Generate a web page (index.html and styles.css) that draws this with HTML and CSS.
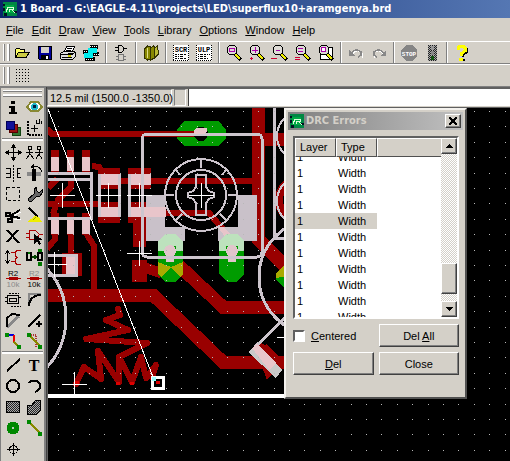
FILE: index.html
```html
<!DOCTYPE html>
<html lang="en">
<head>
<meta charset="utf-8">
<title>1 Board - G:\EAGLE-4.11\projects\LED\superflux10+aramgenya.brd</title>
<link rel="stylesheet" href="styles.css">
</head>
<body>
<svg class="defs" aria-hidden="true">
  <defs>
    <symbol id="app" viewBox="0 0 14 14"><path fill="#084" d="M0 0h14v14H0z"/><path fill="#012" d="M0 2h2v2H0zM0 6h4v3H0zM1 11h3v3H1zM11 9h3v2h-3z"/><path fill="#0a4" d="M2 3h9v8H2z"/><path fill="none" stroke="#dfd" d="M3 10l2-5h5v2H7l-1 3M9 8l3 3"/></symbol>
    <symbol id="lens" viewBox="0 0 18 18"><path stroke="#000" stroke-width="4" d="M10 10l6 6"/><path stroke="#ee0" stroke-width="2" d="M10 10l5 5"/><circle cx="7" cy="6" r="5" fill="#dedbd6" stroke="#000"/></symbol>
    <pattern id="check" width="2" height="2" patternUnits="userSpaceOnUse"><path fill="#aaa" d="M0 0h2v2H0z"/><path fill="#222" d="M0 0h1v1H0zM1 1h1v1H1z"/></pattern>
    <pattern id="dots" x="58" y="111" width="77" height="77" patternUnits="userSpaceOnUse">
      <path stroke="#b8b8b8" stroke-dasharray="1 14 1 15 1 14 1 15 1 14" d="M0 .5h77M0 15.500h77M0 31.500h77M0 46.500h77M0 62.500h77"/>
    </pattern>
  </defs>
</svg>
<div class="window">
  <header class="titlebar"><svg class="logo"><use href="#app"/></svg><h1>1 Board - G:\EAGLE-4.11\projects\LED\superflux10+aramgenya.brd</h1></header>
  <nav class="menu">
    <button><u>F</u>ile</button><button><u>E</u>dit</button><button><u>D</u>raw</button><button><u>V</u>iew</button><button><u>T</u>ools</button><button><u>L</u>ibrary</button><button><u>O</u>ptions</button><button><u>W</u>indow</button><button><u>H</u>elp</button>
  </nav>
  <div class="toolbar">
    <i class="grip"></i>
    <div class="group">
      <button aria-label="Open"><svg viewBox="0 0 18 18"><path fill="#ff6" stroke="#000" d="M2.500 13.500v-8l1-1h3l1 1h4v3h4.500l-3 5z"/><path fill="#cc4" stroke="#000" d="M2.500 13.500l3-5h11l-3.500 5z"/></svg></button>
      <button aria-label="Save"><svg viewBox="0 0 18 18"><path fill="#009" stroke="#000" d="M2.500 2.500h13v13h-12l-1-1z"/><path fill="#d4d0c8" d="M5 3h8v6H5z"/><path fill="#000" d="M5 11h8v4H5z"/><path fill="#fff" d="M10 12h2v3h-2z"/></svg></button>
      <button aria-label="Print"><svg viewBox="0 0 18 18"><path fill="#fff" stroke="#000" d="M5.500 7.500l2-5h8l-2 5z"/><path stroke="#000" d="M8 4.500h5M7 6.500h5"/><path fill="#ddd" stroke="#000" d="M1.500 9.500l3-2h11l1 1v4l-3 3h-11l-1-1z"/><path stroke="#000" d="M2 10.500h11l3-2M3 13.500h10"/><path stroke="#cc0" stroke-width="2" d="M9 12h3"/></svg></button>
      <button aria-label="CAM Processor"><svg viewBox="0 0 18 18"><path fill="#000" d="M8 1h8v4H8zM1 6h6v4H1zM11 8h6v4h-6zM3 13h10v4H3z"/><path fill="#0ee" d="M6 4h9v5H6zM2 9h9v5H2z"/><path fill="none" stroke="#fff" stroke-dasharray="1 1" d="M8 2.500h7M2 7.500h4M12 10.500h5M4 15.500h8"/></svg></button>
    </div>
    <div class="group">
      <button aria-label="Schematic"><svg viewBox="0 0 18 18"><path fill="none" stroke="#000" d="M3 3.500h3M3 6.500h3M6.500 1.500v7h3l2-2v-3l-2-2zM12 4.500h3"/><path fill="none" stroke="#777" d="M6.500 10.500h5v6h-5zM4 12.500h2M4 15.500h2M12 12.500h2M12 15.500h2"/></svg></button>
    </div>
    <div class="group">
      <button aria-label="Library"><svg viewBox="0 0 18 18"><path fill="#880" stroke="#330" d="M2.500 5l3-3 3 1v12l-3 1-3-2zM8.500 4l3-2 1 1v11l-4 2z"/><path fill="#bb3" stroke="#330" d="M12.500 4l3-2 1 8-4 4z"/><path stroke="#dd8" d="M5.500 4v10"/></svg></button>
    </div>
    <div class="group">
      <button aria-label="Script"><svg viewBox="0 0 18 18"><path fill="#fff" d="M1 1h16v16H1z"/><path stroke="#000" stroke-dasharray="2 1 1 1 3 1" d="M3 10.500h12M3 12.500h9M3 14.500h11"/><path stroke="#000" stroke-dasharray="1 1" d="M1 16.500h16M16.500 1v16M1.500 1v16"/><text x="9" y="8" class="chip">SCR</text></svg></button>
      <button aria-label="User language program"><svg viewBox="0 0 18 18"><path fill="#fff" d="M1 1h16v16H1z"/><path stroke="#000" stroke-dasharray="1 1 3 1 2 1" d="M3 10.500h12M3 12.500h9M3 14.500h11"/><path stroke="#000" stroke-dasharray="1 1" d="M1 16.500h16M16.500 1v16M1.500 1v16"/><text x="9" y="8" class="chip">ULP</text></svg></button>
    </div>
    <div class="group">
      <button aria-label="Zoom to fit"><svg viewBox="0 0 18 18"><use href="#lens"/><path fill="none" stroke="#a0a" d="M4.500 4.500h5v3h-5z"/></svg></button>
      <button aria-label="Zoom in"><svg viewBox="0 0 18 18"><use href="#lens"/><path stroke="#a0a" d="M4 6.500h6M7.500 3v6"/><path stroke="#c03" d="M2 14.500h3M3.500 13v3"/></svg></button>
      <button aria-label="Zoom out"><svg viewBox="0 0 18 18"><use href="#lens"/><path stroke="#a0a" d="M5 6.500h4"/><path stroke="#c03" d="M0 14.500h6"/></svg></button>
      <button aria-label="Redraw"><svg viewBox="0 0 18 18"><use href="#lens"/><path stroke="#a0a" d="M4 4.500h5M4 7.500h5"/><path stroke="#c03" d="M1 13.500h5M1 15.500h5"/></svg></button>
      <button aria-label="Zoom selection"><svg viewBox="0 0 18 18"><path fill="#fff" stroke="#000" d="M3.500 3.500h12v12h-12z"/><use href="#lens"/><path fill="#fff" stroke="#a0a" d="M4.500 3.500h4v4h-4z"/></svg></button>
    </div>
    <div class="group">
      <button disabled aria-label="Undo"><svg viewBox="0 0 18 18"><path fill="none" stroke="#fff" d="M5 11c3-5 7-5 10-2v5"/><path fill="none" stroke="#888" stroke-width="1.500" d="M4 10c3-5 7-5 10-2v3l-3 2"/><path fill="#888" d="M2 6v6h6z"/></svg></button>
      <button disabled aria-label="Redo"><svg viewBox="0 0 18 18"><path fill="none" stroke="#fff" d="M14 11c-3-5-7-5-10-2v5"/><path fill="none" stroke="#888" stroke-width="1.500" d="M14 10c-3-5-7-5-10-2v3l3 2"/><path fill="#888" d="M16 6v6h-6z"/></svg></button>
    </div>
    <div class="group">
      <button disabled aria-label="Stop"><svg viewBox="0 0 18 18"><path fill="#858585" d="M6 1h6l5 5v6l-5 5H6l-5-5V6z"/><text x="9" y="12" class="chip stop">STOP</text></svg></button>
      <button aria-label="Go"><svg viewBox="0 0 18 18"><path fill="url(#check)" d="M5 1h9v16H5z"/><circle cx="9.500" cy="4" r="2" fill="#999"/><circle cx="9.500" cy="9" r="2" fill="#888"/><circle cx="9.500" cy="14" r="2" fill="#151"/></svg></button>
    </div>
    <div class="group">
      <button aria-label="Help"><svg viewBox="0 0 18 18"><path fill="none" stroke="#000" stroke-width="2" d="M6 6V4l2-1h4l2 2v3l-4 3v2M9 16h3"/><path fill="none" stroke="#ff0" stroke-width="3" d="M5 6V4l2-2h3l2 2v3l-4 3v2M6 15h4"/></svg></button>
    </div>
  </div>
  <div class="toolbar">
    <i class="grip"></i>
    <button aria-label="Grid"><svg viewBox="0 0 18 18"><path stroke="#000" stroke-dasharray="1 2" d="M3 2.500h15M3 5.500h15M3 8.500h15M3 11.500h15M3 14.500h15"/></svg></button>
  </div>
  <div class="work">
    <aside class="palette">
      <i class="handle"></i>
      <div class="tools">
        <button aria-label="Info"><svg viewBox="0 0 20 20"><path d="M8 4h4v3H8zM6 9h6v6h2v2H6v-2h2v-4H6z"/></svg></button>
        <button aria-label="Show"><svg viewBox="0 0 20 20"><path fill="#fff" stroke="#883" stroke-width="2" d="M3 10l4-5h7l4 5-4 4H7z"/><circle cx="10.500" cy="9.500" r="3.500" fill="#2bc"/><circle cx="10.500" cy="9.500" r="1.500" fill="#024"/></svg></button>
        <button aria-label="Display"><svg viewBox="0 0 20 20"><path fill="#373" stroke="#141" d="M9 9h8v8H9z"/><path fill="#911" stroke="#500" d="M6 6h8v8H6z"/><path fill="#119" stroke="#005" d="M3 3h8v8H3z"/></svg></button>
        <button aria-label="Mark"><svg viewBox="0 0 20 20"><path fill="none" stroke="#000" stroke-width="2" stroke-dasharray="2 1" d="M4 3v14h14"/><path fill="none" stroke="#000" d="M7 10.500h7M10.500 7v7M12.500 2v3h3V1M17.500 2.500v3"/></svg></button>
      </div>
      <hr>
      <div class="tools">
        <button aria-label="Move"><svg viewBox="0 0 20 20"><path stroke="#000" d="M10.500 3v15M3 10.500h15"/><path d="M10.500 2l3 4h-6zM10.500 19l3-4h-6zM2 10.500l4-3v6zM19 10.500l-4-3v6z"/></svg></button>
        <button aria-label="Copy"><svg viewBox="0 0 20 20"><path fill="none" stroke="#000" d="M4.500 4.500h3v3h-3zM2 10.500h7M5.500 7v6M5.500 12l-3 5M6.500 12l3 5M13.500 4.500h3v3h-3zM11 10.500h8M15.500 7v6M15 12l-3 5M15 12l3 5"/></svg></button>
        <button aria-label="Mirror"><svg viewBox="0 0 20 20"><path fill="none" stroke="#000" d="M3 5.500h4v9H3M3 10.500h4M18 5.500h-4v9h4M14 10.500h3"/><path stroke="#000" stroke-dasharray="2 1" d="M10.500 2v17"/></svg></button>
        <button aria-label="Rotate"><svg viewBox="0 0 20 20"><path fill="#888" d="M3 9h14v4H3z"/><path d="M8 6h4v12H8z"/><path fill="none" stroke="#000" d="M8 4c5-2 9 1 10 5"/><path d="M6 4l4-3v5z"/></svg></button>
        <button aria-label="Group"><svg viewBox="0 0 20 20"><path fill="none" stroke="#000" stroke-dasharray="3 2" d="M3.500 3.500h13v13h-13z"/></svg></button>
        <button aria-label="Change"><svg viewBox="0 0 20 20"><path fill="#666" stroke="#000" d="M12 3l-2 3v4l-6 5 1 2 2 1 6-6h3l2-3V6l-3 3-2-2z"/></svg></button>
        <button aria-label="Cut"><svg viewBox="0 0 20 20"><path stroke="#fff" d="M9 12l9-5M11 14l7 1"/><path stroke="#000" stroke-width="2" d="M7 11l10-6M7 11l10 2"/><path fill="none" stroke="#000" stroke-width="1.500" d="M3 8h4v3H3zM5 14h4v3H5zM7 14l3-4"/></svg></button>
        <button aria-label="Paste"><svg viewBox="0 0 20 20"><path stroke="#000" stroke-width="2" d="M5 3l9 9"/><path fill="#ee0" d="M11 11l4 1 3 5H3z"/><path stroke="#990" d="M9 15l3-3"/></svg></button>
        <button aria-label="Delete"><svg viewBox="0 0 20 20"><path stroke="#000" stroke-width="2" d="M4 4l12 13M15 4L4 16"/></svg></button>
        <button aria-label="Add"><svg viewBox="0 0 20 20"><path fill="none" stroke="#a00" d="M5.500 4.500h6l4 4-4 5h-6zM2 7.500h4M2 11.500h4M16 8.500h3"/><path d="M10 8v10l3-3 2 4 2-1-2-4h4z"/></svg></button>
        <button aria-label="Pinswap"><svg viewBox="0 0 20 20"><path stroke="#000" d="M4.500 4v12"/><path fill="none" stroke="#000" d="M2 7l2.500-3L7 7M2 13l2.500 3L7 13"/><path fill="none" stroke="#a00" d="M8 5.500h4M8 14.500h4M18 3.500h-4l-2 2v3l2 2-2 2v3l2 2h4"/></svg></button>
        <button aria-label="Gateswap"><svg viewBox="0 0 20 20"><path fill="none" stroke="#000" stroke-width="1.500" d="M3 6h4v7H3zM14 6h4v7h-4z"/><path stroke="#040" stroke-width="1.500" d="M8 10h5M11 8v4"/><path fill="#070" d="M14 2h4v3h-4zM14 15h4v4h-4zM4 5h2v2H4z"/></svg></button>
        <button aria-label="Name"><svg viewBox="0 0 20 20"><path stroke="#a00" d="M3 10.500h15M6 9.500h9M6 11.500h9"/><text x="10" y="8" class="part">R2</text><text x="10" y="19" class="part dim">10k</text></svg></button>
        <button aria-label="Value"><svg viewBox="0 0 20 20"><path stroke="#a00" d="M3 10.500h15M6 9.500h9M6 11.500h9"/><text x="10" y="8" class="part dim">R2</text><text x="10" y="19" class="part">10k</text></svg></button>
        <button aria-label="Smash"><svg viewBox="0 0 20 20"><path fill="none" stroke="#000" d="M4.500 6.500h11v8h-11zM6.500 9v3h7V9zM2 8.500h2M2 12.500h2M16 8.500h2"/><path fill="none" stroke="#000" stroke-dasharray="2 1" d="M6 4.500h10M8 17.500h10"/></svg></button>
        <button aria-label="Miter"><svg viewBox="0 0 20 20"><path fill="none" stroke="#888" stroke-width="2" d="M5 16V5h12"/><path fill="none" stroke="#000" stroke-width="2" d="M5 17c0-6 4-11 12-11"/></svg></button>
        <button aria-label="Split"><svg viewBox="0 0 20 20"><path fill="none" stroke="#888" stroke-width="3" d="M4 17L16 6"/><path fill="none" stroke="#000" stroke-width="2" d="M4 17V8l5-4 8 1"/></svg></button>
        <button aria-label="Optimize"><svg viewBox="0 0 20 20"><path stroke="#000" stroke-width="2" d="M4 17L16 5"/><path stroke="#000" stroke-width="1.500" d="M12 14h6M15 11v6"/></svg></button>
        <button aria-label="Route"><svg viewBox="0 0 20 20"><path fill="none" stroke="#00d" stroke-width="2" d="M5 4h6"/><path fill="none" stroke="#e00" stroke-width="2" d="M11 4v7"/><path fill="none" stroke="#880" stroke-width="2" d="M11 11l5 5"/><path fill="#080" d="M2 2h4v4H2zM14 14h4v4h-4z"/></svg></button>
        <button aria-label="Ripup"><svg viewBox="0 0 20 20"><path fill="none" stroke="#a33" stroke-width="2" stroke-dasharray="1 1" d="M5 4h7v12"/><path stroke="#880" stroke-width="2" d="M5 4l12 12"/><path fill="#080" d="M3 2h4v4H3zM14 14h4v4h-4z"/></svg></button>
      </div>
      <hr>
      <div class="tools">
        <button aria-label="Wire"><svg viewBox="0 0 20 20"><path stroke="#000" stroke-width="2" d="M4 16L17 4"/></svg></button>
        <button aria-label="Text"><svg viewBox="0 0 20 20"><text x="10" y="16" class="type">T</text></svg></button>
        <button aria-label="Circle"><svg viewBox="0 0 20 20"><circle cx="10" cy="10" r="6" fill="none" stroke="#000" stroke-width="2"/></svg></button>
        <button aria-label="Arc"><svg viewBox="0 0 20 20"><path fill="none" stroke="#000" stroke-width="2" d="M5 7c3-4 11-3 11 3 0 3-2 5-5 6"/></svg></button>
        <button aria-label="Rectangle"><svg viewBox="0 0 20 20"><path fill="url(#check)" stroke="#000" d="M3.500 4.500h13v11h-13z"/></svg></button>
        <button aria-label="Polygon"><svg viewBox="0 0 20 20"><path fill="url(#check)" stroke="#000" d="M3.500 17.500v-9h4l4-5h5v10l-4 4z"/></svg></button>
        <button aria-label="Via"><svg viewBox="0 0 20 20"><circle cx="10" cy="10" r="6.500" fill="#080"/><circle cx="10" cy="10" r="1.500" fill="#bcb"/></svg></button>
        <button aria-label="Signal"><svg viewBox="0 0 20 20"><path stroke="#880" stroke-width="2" d="M5 4l11 11"/><path fill="#080" d="M3 2h4v4H3zM14 14h4v4h-4z"/></svg></button>
        <button aria-label="Hole"><svg viewBox="0 0 20 20"><circle cx="10.500" cy="10.500" r="4" fill="none" stroke="#000"/><path stroke="#000" d="M4 10.500h13M10.500 4v13"/></svg></button>
      </div>
    </aside>
    <main class="editor">
      <div class="command">
        <output>12.5 mil (1500.0 -1350.0)</output>
        <i class="cell"></i>
        <input type="text" aria-label="Command">
      </div>
      <div class="canvas">
        <svg class="board" viewBox="48 108 462 353" preserveAspectRatio="xMinYMin slice">
          <g fill="none" stroke="#900">
            <path stroke-width="6" d="M47 129l5 5h150M120 181h133M151 213h58l24 28M98 204H48M71 178v9l-13 13-5 14M92 166l7 1 6 8M48 188l9-9M55 233v6l-8 10M71 233v22M86 233l8 13v45"/>
            <path stroke-width="13" d="M258 108v131l30 30M264 139h24M48 295h105l70 67h65M170 257l53 50h65M139 223v24M265 345l-7 15"/>
            <path stroke-width="6" stroke-linejoin="round" stroke-linecap="round" d="M118 309l2 6-14 5 22 10-42 9 61 4-28 14v25l-21-31 3 28-17-12-8 17M119 357l13 25 9-25 5 21 10-13-4 12"/>
          </g>
          <path fill="#900" d="M51 150h8v22h-8zM67 150h7v22h-7zM82 150h8v22h-8zM51 213h8v22h-8zM67 213h7v22h-7zM82 213h8v22h-8zM98 168h22v21H98zM98 202h22v21H98zM128 168h23v21h-23zM128 202h23v21h-23zM132 260h15v22h-15zM147 263l13 4v11l-13-4zM62 253h20v23H62zM257 353l9-9 18 18-17 18z"/>
          <circle cx="301" cy="200" r="22" fill="none" stroke="#900" stroke-width="8"/>
          <path fill="#009c00" d="M184 121h35l7 9v8l-7 8h-35l-7-8v-8zM158 241h25v33l-7 8h-11l-7-8zM219 241h25v33l-7 8h-10l-8-8zM276 273l10-9v26l-10-10z"/>
          <path fill="#aa0" d="M158 262l13 5 12-5v12l-3 3-9-10-9 10-4-3zM276 273l10-9v12l-10 2z"/>
          <path stroke="#900" stroke-width="6" d="M177 134h24"/>
          <circle cx="201" cy="134" r="7"/>
          <path fill="#c9c1c9" d="M146 195h19v32h20v14h-39zM238 195h19v46h-39v-14h20z"/>
          <path fill="#e8c5ca" d="M146 211h19v6h-19zM218 227l10 14h8l-12-14z"/>
          <path fill="#bde2bd" d="M158 241l8-7h9l8 7v10h-7v-5h-10v5h-8zM219 241l7-7h11l7 7v10h-6v-5h-12v5h-7z"/>
          <path fill="#e8c5ca" d="M51 157h8v14h-8zM67 157h7v14h-7zM82 157h8v14h-8zM51 220h8v14h-8zM67 220h7v14h-7zM82 220h8v14h-8zM98 174h22v11H98zM98 207h22v10H98zM128 174h23v11h-23zM128 207h38v10h-38zM66 254h10v22H66z"/>
          <g fill="#e0c5ca"><circle cx="170" cy="251" r="6"/><circle cx="232" cy="251" r="6"/><path d="M166 250h8v12h-8zM228 250h8v12h-8z"/></g>
          <g fill="none" stroke="#cdc5cd" stroke-width="3">
            <rect x="142" y="134" width="120" height="123" rx="5"/>
            <path d="M48 173h43v45H48M48 179h43M48 255h28v20H48M99 174v43M119 174v43M129 174v43M274 108v130M274 238h12M286 317l-31 30"/>
            <circle cx="-7" cy="318" r="73"/><circle cx="317" cy="277" r="58"/>
          </g>
          <g fill="none" stroke="#cdc5cd" stroke-width="2">
            <circle cx="201" cy="195" r="36"/><circle cx="201" cy="195" r="25"/><circle cx="302" cy="136" r="25"/><circle cx="302" cy="201" r="25"/>
            <path d="M201 160v8M166 195h8M228 195h8M176 170l4 5M226 170l-4 5M176 220l6-6M226 220l-6-6M196 175h10v12l3 4 5 2v4l-5 2-3 4v12h-10v-12l-3-4-5-2v-4l5-2 3-4z"/>
          </g>
          <path fill="#e8c5ca" d="M194 134v-4l3-2h10v4l-3 2z"/>
          <path fill="#c9c9c9" d="M248 352l9-8 25 26-6 8z"/><path fill="#e8c5ca" d="M252 348l5-4 19 19-7 7z"/>
          <path fill="url(#dots)" d="M48 108h1600v1200H48z"/>
          <path fill="#fff" d="M48 394h238v4H48z"/>
          <path fill="none" stroke="#fff" d="M48 109l105 268M50 195.500h25M62.500 183v25M96 195.500h25M108.500 183v25M127 195.500h25M139.500 183v25M189 195.500h25M201.500 183v25M48 264.500h19M54.500 252v25M127 253.500h25M139.500 241v25M62 384.500h25M74.500 372v22M277 337.500h9"/>
          <path stroke="#fff" stroke-width="3" d="M152.500 377.500h11v11h-11z"/><path fill="#d00" d="M156 381h4v3h-4zM75 381h4v3h-4zM116 382h4v3h-4zM130 382h4v3h-4z"/><path fill="#9ff" d="M152 377h4v4h-4z"/>
        </svg>
        <section class="dialog" role="dialog" aria-labelledby="drc">
          <header class="caption"><svg class="logo"><use href="#app"/></svg><h2 id="drc">DRC Errors</h2>
            <button class="close" aria-label="Close window"><svg viewBox="0 0 8 8"><path stroke="#000" stroke-width="2" d="M0 0l8 8M8 0L0 8"/></svg></button></header>
          <div class="form">
            <div class="list">
              <div class="pane">
                <table class="heads"><thead><tr><th>Layer</th><th>Type</th><th></th></tr></thead></table>
                <div class="rows">
                  <table><tbody>
                    <tr><td>1</td><td>Width</td></tr><tr><td>1</td><td>Width</td></tr><tr><td>1</td><td>Width</td></tr><tr><td>1</td><td>Width</td></tr>
                    <tr class="selected"><td>1</td><td>Width</td></tr>
                    <tr><td>1</td><td>Width</td></tr><tr><td>1</td><td>Width</td></tr><tr><td>1</td><td>Width</td></tr><tr><td>1</td><td>Width</td></tr><tr><td>1</td><td>Width</td></tr><tr><td>1</td><td>Width</td></tr>
                  </tbody></table>
                </div>
              </div>
              <div class="scroll">
                <button aria-label="Scroll up"><svg viewBox="0 0 8 4"><path d="M4 0l4 4H0z"/></svg></button>
                <i class="above"></i><i class="thumb"></i><i class="below"></i>
                <button aria-label="Scroll down"><svg viewBox="0 0 8 4"><path d="M4 4l4-4H0z"/></svg></button>
              </div>
            </div>
            <div class="actions">
              <label><input type="checkbox"><span><u>C</u>entered</span></label>
              <button>Del <u>A</u>ll</button>
              <button><u>D</u>el</button>
              <button>Close</button>
            </div>
          </div>
        </section>
      </div>
    </main>
  </div>
</div>
</body>
</html>
```
FILE: styles.css
```css
* { box-sizing: border-box; }
body, h1, h2, hr { margin: 0; }
body {
  background: #d4d0c8;
  color: #000;
  font: 11px/16px "Liberation Sans", sans-serif;
  overflow: hidden;
}
button, input { font: inherit; color: inherit; padding: 0; border: 0; border-radius: 0; background: none; margin: 0; }
svg { display: block; shape-rendering: crispEdges; }
.defs { position: absolute; width: 0; height: 0; }
.window { display: flex; flex-direction: column; height: 100vh; }

.titlebar {
  display: flex; align-items: center; gap: 3px; height: 18px; padding-left: 3px; flex: none;
  background: linear-gradient(90deg, #0a246a, #5577b3);
}
.logo { width: 14px; height: 14px; flex: none; }
h1, h2 { font: bold 11px/16px "DejaVu Sans Condensed", sans-serif; white-space: nowrap; }
h1 { color: #fff; }

.menu { display: flex; flex: none; height: 23px; padding: 1px 2px 0; }
.menu button { padding: 0 4px; }

.toolbar {
  display: flex; flex: none; height: 23px; padding-left: 3px;
  border-top: 1px solid #fff; border-bottom: 1px solid #808080;
}
.grip { flex: none; width: 6px; margin: 2px 1px 2px 0; border: solid #fff; border-width: 0 2px 0 1px; box-shadow: 1px 0 #808080, inset 1px 0 #808080; }
.group { display: flex; }
.group + .group { border-left: 1px solid #808080; box-shadow: inset 1px 0 #fff; margin-left: 3px; padding-left: 3px; }
.toolbar button { width: 23px; display: grid; place-items: center; }
.toolbar svg { width: 18px; height: 18px; }
.chip { font: bold 7px "Liberation Mono", monospace; text-anchor: middle; }
.stop { font-size: 6px; fill: #fff; }

.work { flex: 1; display: flex; min-height: 0; }
.palette { flex: none; width: 46px; border: solid #808080; border-width: 1px 2px 0 1px; padding: 2px 1px 0; overflow: hidden; }
.handle { display: block; height: 6px; margin: 0 1px; border: solid #fff; border-width: 1px 0 2px; box-shadow: 0 1px #808080, inset 0 1px #808080; }
.tools { display: grid; grid-template-columns: 21px 21px; grid-auto-rows: 21px; }
.tools button { display: grid; place-items: center; }
.tools svg { width: 20px; height: 20px; }
.palette hr { border: solid #808080; border-width: 1px 0 0; box-shadow: inset 0 2px #fff; height: 3px; }
.part { font: 8px "Liberation Sans", sans-serif; text-anchor: middle; }
.dim { fill: #8a8a8a; }
.type { font: bold 16px "Liberation Serif", serif; text-anchor: middle; }

.editor { flex: 1; min-width: 0; display: flex; flex-direction: column; border-left: 1px solid #404040; }
.command { display: flex; flex: none; gap: 2px; height: 20px; border-top: 2px solid #606060; padding-bottom: 1px; background: #d4d0c8; }
.command output { border: 1px solid; border-color: #808080 #fff #fff #808080; padding: 0 1px 0 2px; width: 125px; white-space: nowrap; }
.cell { width: 12px; border: 1px solid; border-color: #808080 #fff #fff #808080; }
.command input { flex: 1; min-width: 0; background: #fff; border: solid #404040; border-width: 0 0 0 1px; padding: 0 2px; }
.canvas { position: relative; flex: 1; min-height: 0; background: #000; border: solid #606060; border-width: 1px 0 0 1px; overflow: hidden; }
.board { width: 100%; height: 100%; }

.dialog {
  position: absolute; left: 236px; top: 0; width: 183px; padding: 2px;
  background: #d4d0c8; border: 2px solid; border-color: #f4f2ee #505050 #505050 #f4f2ee;
}
.caption { display: flex; align-items: center; gap: 2px; height: 18px; padding: 0 2px; background: linear-gradient(90deg, #808080, #c0c0c0); }
.caption h2 { flex: 1; color: #d4d0c8; }
.close, .actions button, .scroll button, .thumb { background: #d4d0c8; border: 1px solid; border-color: #fff #404040 #404040 #fff; box-shadow: inset -1px -1px #808080; }
.close { width: 16px; height: 14px; display: grid; place-items: center; }
.close svg { width: 8px; height: 8px; }
.form { padding: 6px 4px 20px 5px; }
.list { display: flex; background: #fff; border: 2px solid; border-color: #606060 #fff #fff #606060; }
.pane { flex: 1; min-width: 0; }
table { width: 100%; table-layout: fixed; border-collapse: collapse; }
.heads { border-collapse: separate; border-spacing: 0; background: #d4d0c8; }
th { font-weight: normal; text-align: left; height: 19px; padding: 0 4px; line-height: 15px; border: 1px solid; border-color: #fff #505050 #505050 #fff; }
th:nth-child(-n+2) { width: 41px; }
th:nth-child(3) { border-right: 0; }
.rows { height: 160px; display: flex; flex-direction: column; justify-content: center; overflow: hidden; }
.rows table { flex: none; width: 82px; }
.rows tr { height: 16px; }
.rows td { padding: 0 2px; line-height: 16px; }
.selected { background: #d4d0c8; }
.scroll { width: 16px; display: flex; flex-direction: column; background: repeating-conic-gradient(#fff 0 25%, #d4d0c8 0 50%) 0 0 / 2px 2px; }
.scroll button { height: 16px; display: grid; place-items: center; }
.scroll button svg { width: 8px; height: 4px; }
.above { flex: 110; }
.thumb { flex: 30; }
.below { flex: 7; }
.actions { display: grid; grid-template-columns: 1fr 1fr; gap: 5px; padding-top: 5px; }
.actions button { height: 23px; }
.actions label { display: flex; align-items: center; gap: 6px; }
.actions input { appearance: none; width: 12px; height: 12px; background: #fff; border: 2px solid; border-color: #606060 #fff #fff #606060; }
```
